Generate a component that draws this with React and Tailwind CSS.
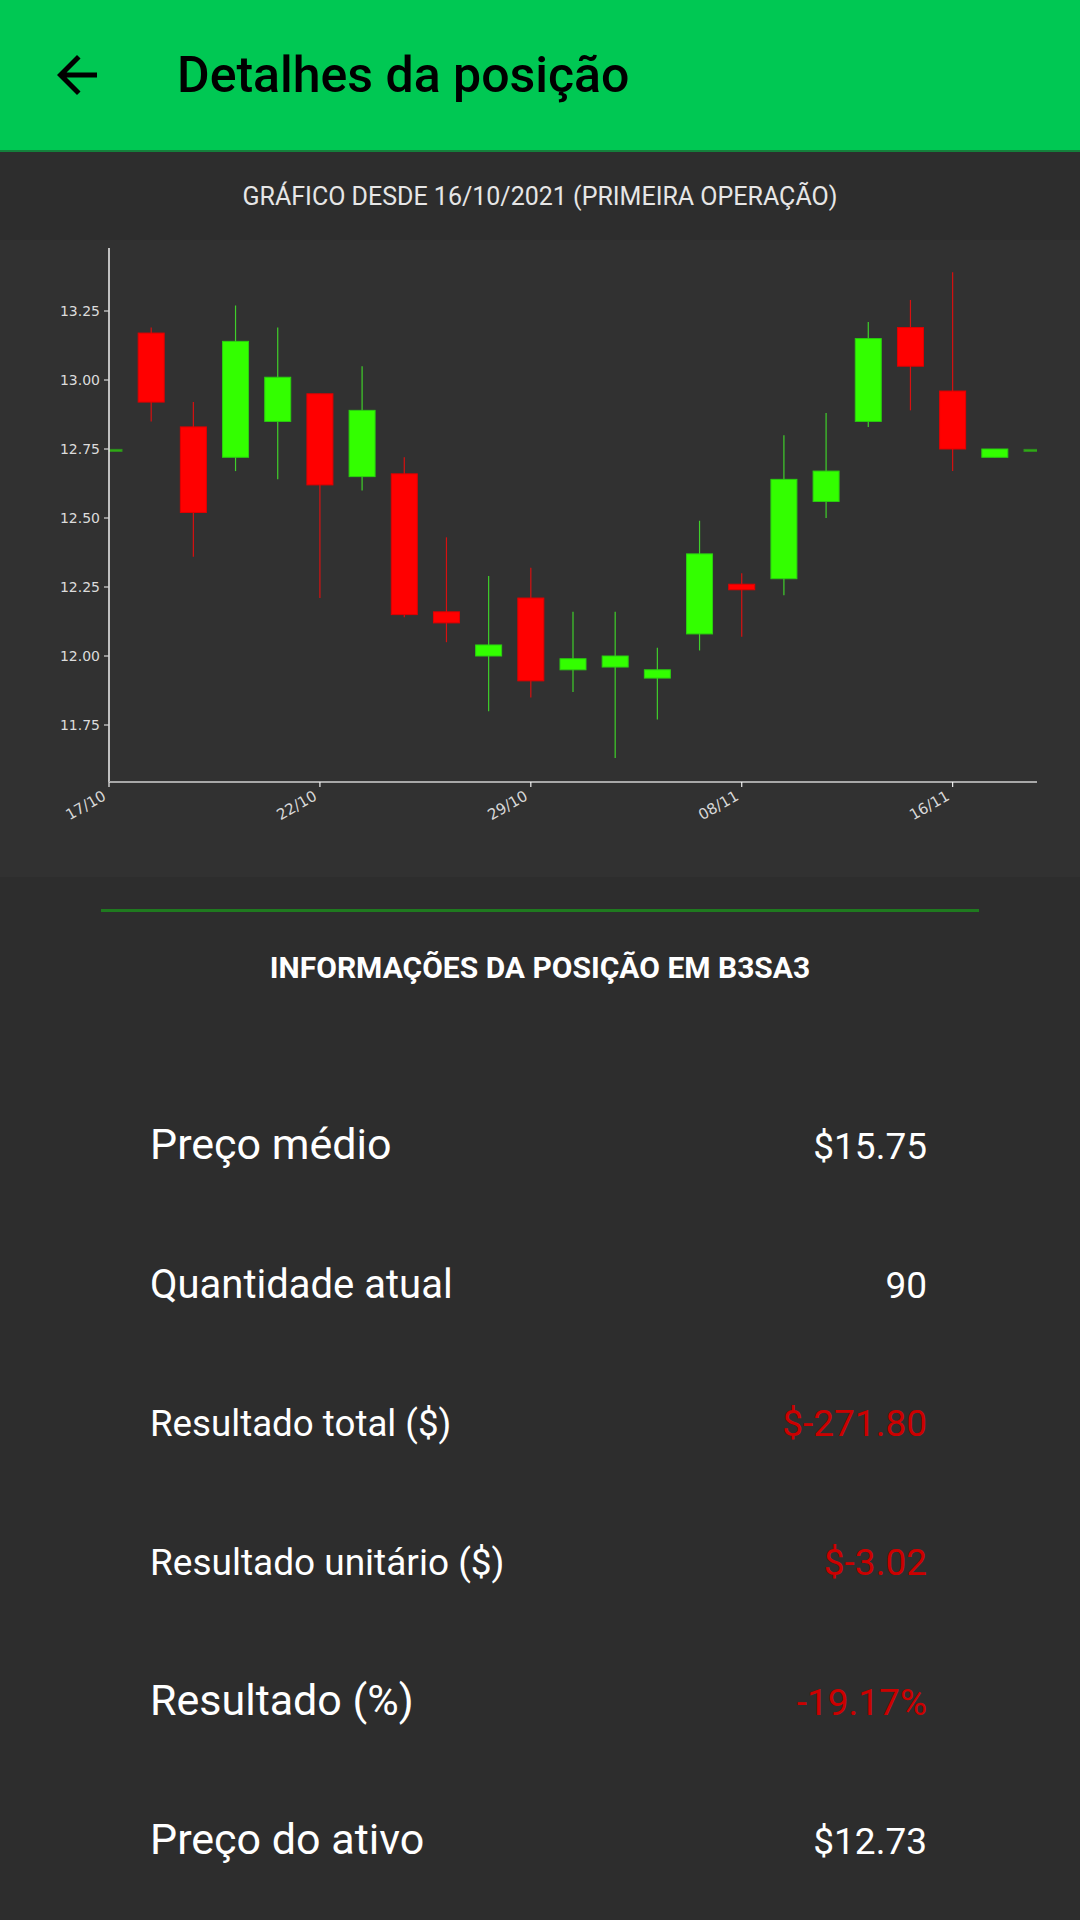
import React from "react";

const candles = [
  { o: 12.745, c: 12.745, h: 12.745, l: 12.745 },
  { o: 13.17, c: 12.92, h: 13.19, l: 12.85 },
  { o: 12.83, c: 12.52, h: 12.92, l: 12.36 },
  { o: 12.72, c: 13.14, h: 13.27, l: 12.67 },
  { o: 12.85, c: 13.01, h: 13.19, l: 12.64 },
  { o: 12.95, c: 12.62, h: 12.95, l: 12.21 },
  { o: 12.65, c: 12.89, h: 13.05, l: 12.6 },
  { o: 12.66, c: 12.15, h: 12.72, l: 12.14 },
  { o: 12.16, c: 12.12, h: 12.43, l: 12.05 },
  { o: 12.0, c: 12.04, h: 12.29, l: 11.8 },
  { o: 12.21, c: 11.91, h: 12.32, l: 11.85 },
  { o: 11.95, c: 11.99, h: 12.16, l: 11.87 },
  { o: 11.96, c: 12.0, h: 12.16, l: 11.63 },
  { o: 11.92, c: 11.95, h: 12.03, l: 11.77 },
  { o: 12.08, c: 12.37, h: 12.49, l: 12.02 },
  { o: 12.26, c: 12.24, h: 12.3, l: 12.07 },
  { o: 12.28, c: 12.64, h: 12.8, l: 12.22 },
  { o: 12.56, c: 12.67, h: 12.88, l: 12.5 },
  { o: 12.85, c: 13.15, h: 13.21, l: 12.83 },
  { o: 13.19, c: 13.05, h: 13.29, l: 12.89 },
  { o: 12.96, c: 12.75, h: 13.39, l: 12.67 },
  { o: 12.72, c: 12.75, h: 12.75, l: 12.72 },
  { o: 12.745, c: 12.745, h: 12.745, l: 12.745 },
];

const yTicks = ["11.75", "12.00", "12.25", "12.50", "12.75", "13.00", "13.25"];
const xTicks = [
  { i: 0, label: "17/10" },
  { i: 5, label: "22/10" },
  { i: 10, label: "29/10" },
  { i: 15, label: "08/11" },
  { i: 20, label: "16/11" },
];

const X0 = 109;
const X1 = 1037;
const TOP = 8;
const BOTTOM = 542;
const sx = (i) => X0 + i * ((X1 - X0) / 22);
const sy = (v) => 140 - (v - 13) * 276;

// label sizes differ per row in the app, kept as-is
const rows = [
  { label: "Preço médio", value: "$15.75", size: "text-[43px]", big: true },
  { label: "Quantidade atual", value: "90", size: "text-[40px]" },
  { label: "Resultado total ($)", value: "$-271.80", size: "text-[36.7px]", neg: true },
  { label: "Resultado unitário ($)", value: "$-3.02", size: "text-[37px]", neg: true },
  { label: "Resultado (%)", value: "-19.17%", size: "text-[43px]", neg: true, big: true },
  { label: "Preço do ativo", value: "$12.73", size: "text-[43px]", big: true },
];

const CandleChart = () => (
  <svg width="1080" height="637" viewBox="0 0 1080 637" className="block bg-[#313131]">
    <defs>
      <clipPath id="plot">
        <rect x={X0} y={TOP} width={X1 - X0} height={BOTTOM - TOP} />
      </clipPath>
    </defs>

    <g clipPath="url(#plot)">
      {candles.map((k, i) => {
        const up = k.c >= k.o;
        const x = sx(i);
        const top = sy(Math.max(k.o, k.c));
        const bot = sy(Math.min(k.o, k.c));
        const flat = bot - top < 1;
        return (
          <g key={i}>
            <line
              x1={x}
              x2={x}
              y1={sy(k.h)}
              y2={sy(k.l)}
              stroke={up ? "#3fcf2a" : "#d81010"}
              strokeWidth="1.2"
            />
            <rect
              x={x - 13}
              y={flat ? top - 1 : top}
              width="26"
              height={flat ? 2 : bot - top}
              fill={up ? "#33ff00" : "#ff0000"}
              stroke={up ? "#2bcf10" : "#e00000"}
              strokeWidth="1"
              opacity={flat ? 0.6 : 1}
            />
          </g>
        );
      })}
    </g>

    <line x1={X0} x2={X0} y1={TOP} y2={BOTTOM} stroke="#f0f0f0" strokeWidth="1.5" />
    <line x1={X0} x2={X1} y1={BOTTOM} y2={BOTTOM} stroke="#a8a8a8" strokeWidth="2" />

    {yTicks.map((t) => (
      <g key={t}>
        <line x1={X0 - 5} x2={X0} y1={sy(+t)} y2={sy(+t)} stroke="#d8d8d8" strokeWidth="1.2" />
        <text
          x={X0 - 9}
          y={sy(+t) + 5}
          textAnchor="end"
          fontFamily="DejaVu Sans, sans-serif"
          fontSize="14"
          fill="#dcdcdc"
        >
          {t}
        </text>
      </g>
    ))}

    {xTicks.map((t) => (
      <g key={t.label}>
        <line x1={sx(t.i)} x2={sx(t.i)} y1={BOTTOM} y2={BOTTOM + 5} stroke="#f0f0f0" strokeWidth="1.2" />
        <text
          transform={`translate(${sx(t.i) - 2} ${BOTTOM + 17}) rotate(-30)`}
          textAnchor="end"
          fontFamily="DejaVu Sans, sans-serif"
          fontSize="15"
          fill="#d8d8d8"
        >
          {t.label}
        </text>
      </g>
    ))}
  </svg>
);

const App = () => {
  return (
    <div className="w-[1080px] min-h-[1920px] bg-[#2d2d2d] font-['Roboto',sans-serif] text-white">
      <div className="h-[152px] bg-[#00c853] border-b-2 border-[#14803c] flex items-center pl-[47px]">
        <svg width="60" height="60" viewBox="0 0 24 24" className="shrink-0">
          <path d="M20 11H7.83l5.59-5.59L12 4l-8 8 8 8 1.41-1.41L7.83 13H20v-2z" fill="#000" />
        </svg>
        <h1 className="ml-[70px] text-[50px] font-medium leading-none text-black">Detalhes da posição</h1>
      </div>

      <div className="h-[88px] flex items-center justify-center">
        <p className="text-[25px] leading-none text-[#e6e6e6]">GRÁFICO DESDE 16/10/2021 (PRIMEIRA OPERAÇÃO)</p>
      </div>

      <CandleChart />

      <div className="mt-[32px] mx-[101px] h-[3px] bg-[#1f7a1f]" />

      <h2 className="mt-[41px] text-center text-[30px] font-bold leading-none">INFORMAÇÕES DA POSIÇÃO EM B3SA3</h2>

      <div className="mt-[136px] pl-[150px] pr-[153px]">
        {rows.map((r) => (
          <div
            key={r.label}
            className={`h-[139px] flex items-baseline justify-between leading-[50px] ${r.big ? "" : "pt-[2px]"}`}
          >
            <span className={r.size}>{r.label}</span>
            <span className={`text-[37px] ${r.neg ? "text-[#cc0000]" : "text-white"}`}>{r.value}</span>
          </div>
        ))}
      </div>
    </div>
  );
};

export default App;
